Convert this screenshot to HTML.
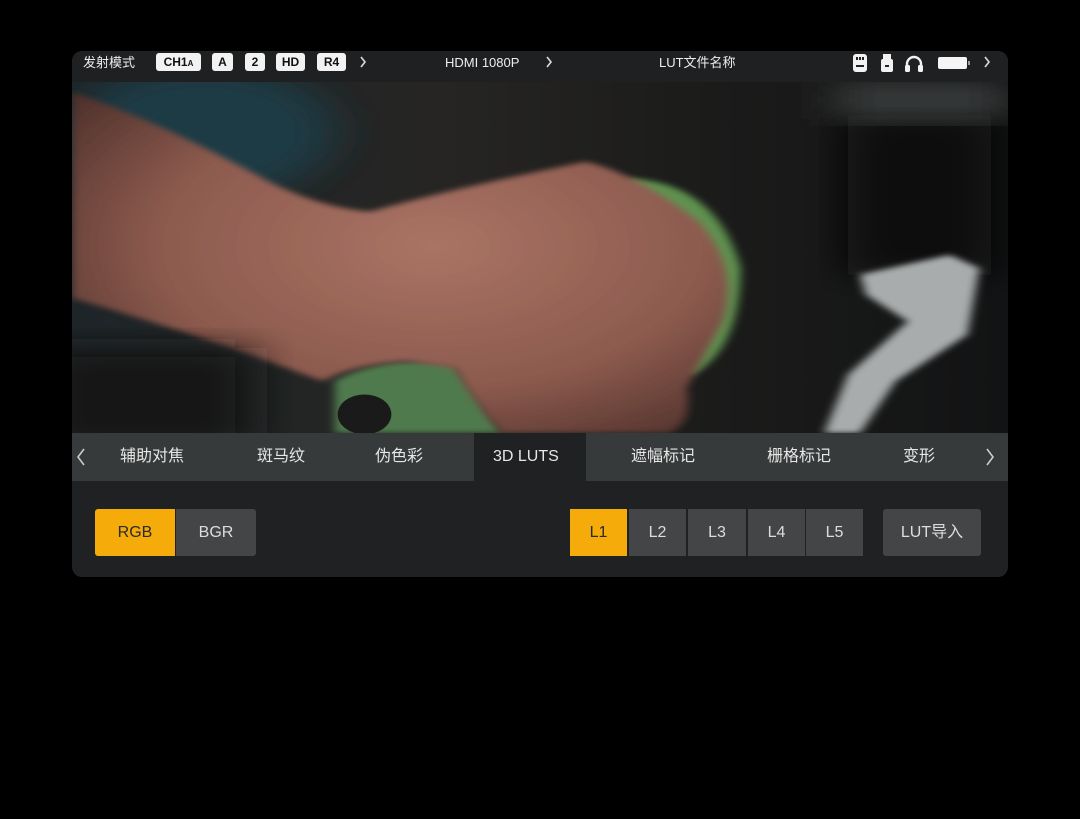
<!DOCTYPE html>
<html><head><meta charset="utf-8"><style>
body{margin:0;background:#000;width:1080px;height:819px;overflow:hidden;font-family:"Liberation Sans","Noto Sans CJK SC",sans-serif;}
.dev{position:absolute;left:72px;top:51px;width:936px;height:526px;border-radius:10px;overflow:hidden;background:#202123;}
.top{position:absolute;left:0;top:0;width:936px;height:31px;background:#1f2021;color:#eee;font-size:13px;}
.t{position:absolute;top:0;line-height:24px;white-space:nowrap;}
.badge{position:absolute;top:53px;height:18px;background:#f2f2f2;color:#111;border-radius:3px;font-weight:bold;font-size:12px;line-height:18px;text-align:center;}
.photo{position:absolute;left:0;top:31px;width:936px;height:351px;}
.tabs{position:absolute;left:0;top:382px;width:936px;height:48px;background:#373a3a;color:#e6e6e6;font-size:16px;}
.tab{position:absolute;top:0;line-height:48px;white-space:nowrap;}
.btn{position:absolute;top:509px;height:47px;line-height:47px;text-align:center;color:#ddd;font-size:16px;background:#434547;}
.chev{position:absolute;color:#ddd;}
</style></head><body>
<div class="dev">
<div class="top">
<span class="t" style="left:11px">发射模式</span>
<span class="t" style="left:373px">HDMI 1080P</span>
<span class="t" style="left:587px">LUT文件名称</span>
</div>
<svg class="photo" viewBox="0 0 1568 1056" preserveAspectRatio="none">
<defs>
<filter id="b" x="-20%" y="-20%" width="140%" height="140%"><feGaussianBlur stdDeviation="40"/></filter>
<filter id="b2"><feGaussianBlur stdDeviation="8"/></filter>
<radialGradient id="sk" cx="0.55" cy="0.45" r="0.7"><stop offset="0" stop-color="#aa7465"/><stop offset="0.6" stop-color="#8c5a4e"/><stop offset="1" stop-color="#4e302a"/></radialGradient>
<linearGradient id="bg" x1="0" x2="1"><stop offset="0" stop-color="#1e2528"/><stop offset="0.4" stop-color="#262523"/><stop offset="0.65" stop-color="#1c1c1b"/><stop offset="1" stop-color="#121314"/></linearGradient>
</defs>
<rect width="1568" height="1056" fill="url(#bg)"/>
<ellipse cx="220" cy="150" rx="220" ry="200" fill="#1d3a45" filter="url(#b)"/>
<rect x="1300" y="100" width="240" height="480" fill="#0a0b0c" filter="url(#b)"/>
<rect x="1280" y="0" width="288" height="110" fill="#3a3e3e" filter="url(#b)"/>
<path d="M1320 580 L1470 520 L1520 560 L1500 760 L1380 900 L1320 1056 L1260 1056 L1300 880 L1400 720 L1330 640Z" fill="#a8acac" filter="url(#b2)"/>
<path d="M930 290 Q1080 300 1120 560 Q1120 800 1040 880 L960 860 Z" fill="#5e9250" filter="url(#b2)"/>
<path d="M440 900 Q520 820 640 850 L720 1056 L440 1056Z" fill="#4f7a4e" filter="url(#b2)"/>
<ellipse cx="490" cy="1000" rx="45" ry="60" fill="#1a1a1a"/>
<path d="M0 30 Q150 120 330 300 Q420 380 500 390 Q640 320 860 240 Q940 270 1050 420 Q1120 560 1090 720 Q1060 820 1030 920 Q1040 1030 1000 1056 L720 1056 Q680 980 640 860 L560 840 Q470 850 420 900 Q300 820 200 760 Q80 690 0 650Z" fill="url(#sk)" filter="url(#b2)"/>
<rect x="-50" y="800" width="350" height="300" fill="#161718" filter="url(#b)"/>
</svg>
<div class="tabs">
<div style="position:absolute;left:402px;top:0;width:112px;height:48px;background:#202123"></div>
<svg class="chev" style="left:4px;top:15px" width="10" height="18"><path d="M8 1 L2 9 L8 17" stroke="#ccc" stroke-width="1.6" fill="none"/></svg>
<span class="tab" style="left:48px">辅助对焦</span>
<span class="tab" style="left:185px">斑马纹</span>
<span class="tab" style="left:303px">伪色彩</span>
<span class="tab" style="left:421px">3D LUTS</span>
<span class="tab" style="left:559px">遮幅标记</span>
<span class="tab" style="left:695px">栅格标记</span>
<span class="tab" style="left:831px">变形</span>
<svg class="chev" style="left:913px;top:15px" width="10" height="18"><path d="M2 1 L8 9 L2 17" stroke="#ccc" stroke-width="1.6" fill="none"/></svg>
</div>
</div>
<div class="badge" style="left:156px;width:45px">CH1<span style="font-size:8px">A</span></div>
<div class="badge" style="left:212px;width:21px">A</div>
<div class="badge" style="left:245px;width:20px">2</div>
<div class="badge" style="left:276px;width:29px">HD</div>
<div class="badge" style="left:317px;width:29px">R4</div>
<svg style="position:absolute;left:359px;top:56px" width="8" height="12"><path d="M2 1 L6 6 L2 11" stroke="#ddd" stroke-width="1.6" fill="none"/></svg>
<svg style="position:absolute;left:545px;top:56px" width="8" height="12"><path d="M2 1 L6 6 L2 11" stroke="#ddd" stroke-width="1.6" fill="none"/></svg>
<svg style="position:absolute;left:983px;top:56px" width="8" height="12"><path d="M2 1 L6 6 L2 11" stroke="#ddd" stroke-width="1.6" fill="none"/></svg>
<svg style="position:absolute;left:850px;top:53px" width="130" height="20">
<rect x="3" y="1" width="14" height="18" rx="3" fill="#f2f2f2"/><rect x="6" y="12" width="8" height="2" fill="#222"/><rect x="6" y="4" width="2" height="3" fill="#222"/><rect x="9" y="4" width="2" height="3" fill="#222"/><rect x="12" y="4" width="2" height="3" fill="#222"/>
<rect x="33" y="1" width="8" height="6" fill="#f2f2f2"/><rect x="31" y="6" width="12" height="13" rx="2" fill="#f2f2f2"/><rect x="35" y="12" width="4" height="2" fill="#222"/>
<path d="M57 17 V11 a7 7 0 0 1 14 0 V17" stroke="#f2f2f2" stroke-width="2.4" fill="none"/><rect x="55" y="12" width="5" height="7" rx="1.5" fill="#f2f2f2"/><rect x="68" y="12" width="5" height="7" rx="1.5" fill="#f2f2f2"/>
<rect x="88" y="4" width="29" height="12" rx="2" fill="#f5f5f5"/><rect x="118" y="8" width="2" height="4" fill="#999"/>
</svg>
<div class="btn" style="left:95px;width:80px;background:#f5ab0a;color:#2a2a2a;border-radius:3px 0 0 3px">RGB</div>
<div class="btn" style="left:176px;width:80px;border-radius:0 3px 3px 0">BGR</div>
<div class="btn" style="left:570px;width:57px;background:#f5ab0a;color:#2a2a2a">L1</div>
<div class="btn" style="left:629px;width:57px">L2</div>
<div class="btn" style="left:688px;width:58px">L3</div>
<div class="btn" style="left:748px;width:57px">L4</div>
<div class="btn" style="left:806px;width:57px">L5</div>
<div class="btn" style="left:883px;width:98px;border-radius:3px">LUT导入</div>
</body></html>
